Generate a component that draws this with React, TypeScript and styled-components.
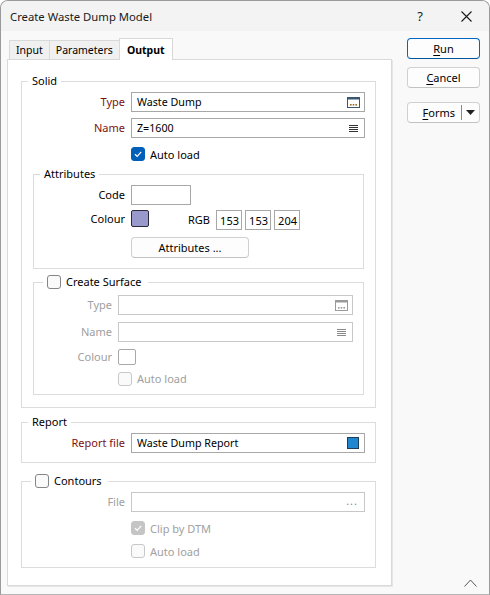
import React from "react";
import styled, { createGlobalStyle } from "styled-components";

const GlobalStyle = createGlobalStyle`
  html, body {
    margin: 0;
    padding: 0;
    background: #ffffff;
  }
  body {
    font-family: "Noto Sans", "DejaVu Sans", sans-serif;
    font-size: 11px;
    color: #000;
  }
  * {
    box-sizing: border-box;
  }
`;

type Tone = "normal" | "req" | "dis";

const toneColor = (t: Tone) =>
  t === "req" ? "#7a1212" : t === "dis" ? "#a0a0a0" : "#000000";

function App() {
  return (
    <>
      <GlobalStyle />
      <Window>
        <TitleBar>
          <Title>Create Waste Dump Model</Title>
          <TitleBtn>?</TitleBtn>
          <TitleBtn>
            <svg width="11" height="11" viewBox="0 0 11 11">
              <path d="M0.5 0.5 L10.5 10.5 M10.5 0.5 L0.5 10.5" stroke="#1a1a1a" strokeWidth="1.1" />
            </svg>
          </TitleBtn>
        </TitleBar>

        <Body>
          <TabArea>
            <TabStrip>
              <Tab>Input</Tab>
              <Tab>Parameters</Tab>
              <Tab $active>Output</Tab>
            </TabStrip>

            <Panel>
              <Group $pb={12}>
                <Legend>Solid</Legend>
                <Rows>
                  <Row $label={93}>
                    <Label $tone="req">Type</Label>
                    <Field>
                      <FieldText>Waste Dump</FieldText>
                      <BrowseIcon />
                    </Field>
                  </Row>
                  <Row $label={93}>
                    <Label $tone="req">Name</Label>
                    <Field>
                      <FieldText>Z=1600</FieldText>
                      <ListIcon />
                    </Field>
                  </Row>
                  <Row $label={93}>
                    <span />
                    <Check checked>Auto load</Check>
                  </Row>
                </Rows>

                <SubGroup $mt={2} $pb={10}>
                  <Legend>Attributes</Legend>
                  <Rows>
                    <Row $label={81}>
                      <Label $tone="normal">Code</Label>
                      <SmallBox />
                    </Row>
                    <Row $label={81} $align="start" $gap={5}>
                      <Label $tone="normal" $top={1}>
                        Colour
                      </Label>
                      <ColourLine>
                        <Swatch $fill="#9999cc" />
                        <RgbLabel>RGB</RgbLabel>
                        <RgbBoxes>
                          <RgbBox>153</RgbBox>
                          <RgbBox>153</RgbBox>
                          <RgbBox>204</RgbBox>
                        </RgbBoxes>
                      </ColourLine>
                    </Row>
                    <Row $label={81} $gap={7}>
                      <span />
                      <PushButton $w={118}>Attributes ...</PushButton>
                    </Row>
                  </Rows>
                </SubGroup>

                <SubGroup $mt={5} $pb={9}>
                  <Legend $boxed>
                    <Check>Create Surface</Check>
                  </Legend>
                  <Rows $pt={4}>
                    <Row $label={68} $gap={7}>
                      <Label $tone="dis">Type</Label>
                      <Field $disabled>
                        <FieldText />
                        <BrowseIcon disabled />
                      </Field>
                    </Row>
                    <Row $label={68} $gap={7}>
                      <Label $tone="dis">Name</Label>
                      <Field $disabled>
                        <FieldText />
                        <ListIcon disabled />
                      </Field>
                    </Row>
                    <Row $label={68} $gap={7} $h={16}>
                      <Label $tone="dis">Colour</Label>
                      <Swatch $fill="#ffffff" $disabled $h={16} />
                    </Row>
                    <Row $label={68} $h={14}>
                      <span />
                      <Check disabled>Auto load</Check>
                    </Row>
                  </Rows>
                </SubGroup>
              </Group>

              <Group $mt={6} $pb={9}>
                <Legend>Report</Legend>
                <Rows>
                  <Row $label={93}>
                    <Label $tone="req">Report file</Label>
                    <Field>
                      <FieldText>Waste Dump Report</FieldText>
                      <ReportIcon />
                    </Field>
                  </Row>
                </Rows>
              </Group>

              <Group $mt={10} $pb={6}>
                <Legend $boxed>
                  <Check>Contours</Check>
                </Legend>
                <Rows>
                  <Row $label={93}>
                    <Label $tone="dis">File</Label>
                    <Field $disabled>
                      <FieldText />
                      <Dots>...</Dots>
                    </Field>
                  </Row>
                  <Row $label={93}>
                    <span />
                    <Check checked disabled>
                      Clip by DTM
                    </Check>
                  </Row>
                  <Row $label={93} $mt={-3}>
                    <span />
                    <Check disabled>Auto load</Check>
                  </Row>
                </Rows>
              </Group>
            </Panel>
          </TabArea>

          <SideColumn>
            <PushButton $w={73} $h={21} $default>
              <u>R</u>un
            </PushButton>
            <PushButton $w={73} $h={21} $mt={8}>
              <u>C</u>ancel
            </PushButton>
            <SplitButton>
              <SplitMain>
                <u>F</u>orms
              </SplitMain>
              <SplitDivider />
              <SplitArrow>
                <svg width="9" height="5" viewBox="0 0 9 5">
                  <path d="M0 0 H9 L4.5 5 Z" fill="#222" />
                </svg>
              </SplitArrow>
            </SplitButton>
            <Collapse>
              <svg width="13" height="8" viewBox="0 0 13 8">
                <path d="M0.5 7.5 L6.5 1 L12.5 7.5" fill="none" stroke="#555" strokeWidth="1" />
              </svg>
            </Collapse>
          </SideColumn>
        </Body>
      </Window>
    </>
  );
}

type CheckProps = {
  checked?: boolean;
  disabled?: boolean;
  children?: React.ReactNode;
};

function Check({ checked, disabled, children }: CheckProps) {
  return (
    <CheckWrap $disabled={disabled}>
      <CheckBox $checked={checked} $disabled={disabled}>
        {checked && (
          <svg width="10" height="10" viewBox="0 0 10 10">
            <path d="M2 5.2 L4.2 7.3 L8.2 2.8" fill="none" stroke="#fff" strokeWidth="1.2" />
          </svg>
        )}
      </CheckBox>
      {children}
    </CheckWrap>
  );
}

function BrowseIcon({ disabled }: { disabled?: boolean }) {
  const frame = disabled ? "#9a9a9a" : "#3b5670";
  const dots = disabled ? "#9a9a9a" : "#9c6a22";
  return (
    <svg width="13" height="11" viewBox="0 0 13 11">
      <rect x="0.5" y="0.5" width="12" height="10" fill="#fff" stroke={frame} />
      <rect x="1" y="1" width="11" height="1.5" fill={frame} />
      <rect x="3" y="7" width="1.6" height="1.6" fill={dots} />
      <rect x="5.7" y="7" width="1.6" height="1.6" fill={dots} />
      <rect x="8.4" y="7" width="1.6" height="1.6" fill={dots} />
    </svg>
  );
}

function ListIcon({ disabled }: { disabled?: boolean }) {
  const c = disabled ? "#8a8a8a" : "#333";
  return (
    <svg width="9" height="9" viewBox="0 0 9 9" style={{ marginRight: 2 }}>
      <path d="M0 1.5 H9 M0 3.5 H9 M0 5.5 H9 M0 7.5 H9" stroke={c} strokeWidth="1" />
    </svg>
  );
}

function ReportIcon() {
  return (
    <svg width="12" height="12" viewBox="0 0 12 12" style={{ marginRight: 1 }}>
      <rect x="0.5" y="0.5" width="11" height="11" fill="#1f86d0" stroke="#1d3d58" />
    </svg>
  );
}

export default App;

const Window = styled.div`
  width: 490px;
  height: 595px;
  border: 1px solid #9a9a9a;
  border-bottom-color: #b5b5b5;
  border-radius: 8px 8px 0 0;
  background: #f9f9f9;
  display: flex;
  flex-direction: column;
  overflow: hidden;
`;

const TitleBar = styled.div`
  height: 30px;
  flex: none;
  display: flex;
  align-items: center;
  background: #f3f3f3;
  padding-left: 9px;
`;

const Title = styled.div`
  flex: 1;
  font-size: 11.3px;
  color: #1a1a1a;
  padding-top: 1px;
`;

const TitleBtn = styled.div`
  width: 46px;
  height: 30px;
  display: flex;
  align-items: center;
  justify-content: center;
  font-size: 13px;
  color: #1a1a1a;
`;

const Body = styled.div`
  flex: 1;
  display: flex;
  padding: 7px 0 7px 6px;
`;

const TabArea = styled.div`
  width: 385px;
  display: flex;
  flex-direction: column;
`;

const TabStrip = styled.div`
  height: 21px;
  display: flex;
  align-items: flex-end;
  padding-left: 3px;
  position: relative;
  z-index: 1;
`;

const Tab = styled.div<{ $active?: boolean }>`
  height: ${(p) => (p.$active ? 22 : 19)}px;
  margin-bottom: ${(p) => (p.$active ? -1 : 0)}px;
  padding: 0 ${(p) => (p.$active ? 7 : 6)}px;
  display: flex;
  align-items: center;
  border: 1px solid #d9d9d9;
  border-bottom: none;
  margin-left: -1px;
  background: ${(p) => (p.$active ? "#ffffff" : "#f0f0f0")};
  font-weight: ${(p) => (p.$active ? 700 : 400)};
  font-size: 10.5px;
  color: #000;
`;

const Panel = styled.div`
  height: 527px;
  background: #ffffff;
  border: 1px solid #d9d9d9;
  box-shadow: 1px 1px 0 #e6e6e6;
  padding: 13px 15px 0 13px;
`;

const Group = styled.fieldset<{ $mt?: number; $pb?: number }>`
  margin: ${(p) => p.$mt ?? 0}px 0 0;
  padding: 0 10px ${(p) => p.$pb ?? 11}px;
  border: 1px solid #dcdcdc;
  min-width: 0;
`;

const SubGroup = styled(Group)`
  margin-left: 1px;
  margin-right: 1px;
  padding-bottom: ${(p) => p.$pb ?? 9}px;
`;

const Legend = styled.legend<{ $boxed?: boolean }>`
  padding: 0 ${(p) => (p.$boxed ? 6 : 4)}px 0 4px;
  margin-left: ${(p) => (p.$boxed ? -1 : -4)}px;
  line-height: 16px;
  height: 16px;
`;

const Rows = styled.div<{ $pt?: number }>`
  display: flex;
  flex-direction: column;
  gap: 6px;
  padding-top: ${(p) => p.$pt ?? 3}px;
`;

const Row = styled.div<{
  $label: number;
  $gap?: number;
  $mt?: number;
  $h?: number;
  $align?: string;
}>`
  display: grid;
  grid-template-columns: ${(p) => p.$label}px 1fr;
  column-gap: 6px;
  align-items: ${(p) => p.$align ?? "center"};
  min-height: ${(p) => p.$h ?? 20}px;
  height: ${(p) => (p.$h ? `${p.$h}px` : "auto")};
  margin-top: ${(p) => (p.$gap !== undefined ? p.$gap - 6 : 0) + (p.$mt ?? 0)}px;
`;

const Label = styled.span<{ $tone: Tone; $top?: number }>`
  text-align: right;
  color: ${(p) => toneColor(p.$tone)};
  white-space: nowrap;
  line-height: 16px;
  padding-top: ${(p) => p.$top ?? 0}px;
`;

const Field = styled.div<{ $disabled?: boolean }>`
  height: 20px;
  border: 1px solid ${(p) => (p.$disabled ? "#c8c8c8" : "#a8a8a8")};
  background: #fff;
  display: flex;
  align-items: center;
  padding: 0 4px 0 5px;
`;

const FieldText = styled.span`
  flex: 1;
  white-space: nowrap;
  overflow: hidden;
  font-size: 10.7px;
`;

const Dots = styled.span`
  color: #888;
  letter-spacing: 1px;
  line-height: 1;
  padding-bottom: 4px;
  margin-right: 2px;
`;

const SmallBox = styled.div`
  width: 60px;
  height: 20px;
  border: 1px solid #a8a8a8;
  background: #fff;
`;

const ColourLine = styled.div`
  display: flex;
  align-items: flex-start;
`;

const Swatch = styled.div<{ $fill: string; $disabled?: boolean; $h?: number }>`
  width: 18px;
  height: ${(p) => p.$h ?? 17}px;
  border: 1px solid ${(p) => (p.$disabled ? "#a8a8a8" : "#2a2a3a")};
  border-radius: 2px;
  background: ${(p) => p.$fill};
`;

const RgbLabel = styled.span`
  width: 28px;
  margin-left: 39px;
  line-height: 20px;
`;

const RgbBoxes = styled.div`
  display: flex;
  gap: 3px;
`;

const RgbBox = styled.div`
  width: 26px;
  height: 20px;
  border: 1px solid #a8a8a8;
  display: flex;
  align-items: center;
  justify-content: flex-end;
  padding-right: 2px;
`;

const PushButton = styled.div<{
  $w: number;
  $h?: number;
  $mt?: number;
  $default?: boolean;
}>`
  width: ${(p) => p.$w}px;
  height: ${(p) => p.$h ?? 21}px;
  margin-top: ${(p) => p.$mt ?? 0}px;
  border: 1px solid ${(p) => (p.$default ? "#0067c0" : "#d0d0d0")};
  border-bottom-color: ${(p) => (p.$default ? "#00549c" : "#c2c2c2")};
  border-radius: 4px;
  background: #fdfdfd;
  display: flex;
  align-items: center;
  justify-content: center;
  color: #000;
  u {
    text-decoration-thickness: 1px;
    text-underline-offset: 2px;
  }
`;

const SideColumn = styled.div`
  margin-left: 15px;
  width: 74px;
  display: flex;
  flex-direction: column;
`;

const SplitButton = styled.div`
  margin-top: 14px;
  width: 73px;
  height: 21px;
  border: 1px solid #d0d0d0;
  border-bottom-color: #c2c2c2;
  border-radius: 4px;
  background: #fdfdfd;
  display: flex;
  align-items: center;
  u {
    text-decoration-thickness: 1px;
    text-underline-offset: 2px;
  }
`;

const SplitMain = styled.span`
  flex: 1;
  text-align: right;
  padding-right: 6px;
`;

const SplitDivider = styled.span`
  width: 1px;
  height: 15px;
  background: #8a8a8a;
`;

const SplitArrow = styled.span`
  width: 17px;
  display: flex;
  justify-content: center;
`;

const Collapse = styled.div`
  margin-top: auto;
  align-self: flex-end;
  margin-right: 4px;
  height: 8px;
  display: flex;
`;

const CheckWrap = styled.label<{ $disabled?: boolean }>`
  display: inline-flex;
  align-items: center;
  gap: 5px;
  color: ${(p) => (p.$disabled ? "#a0a0a0" : "#000")};
  white-space: nowrap;
`;

const CheckBox = styled.span<{ $checked?: boolean; $disabled?: boolean }>`
  width: 14px;
  height: 14px;
  border-radius: 3px;
  display: inline-flex;
  align-items: center;
  justify-content: center;
  border: 1px solid
    ${(p) =>
      p.$checked
        ? p.$disabled
          ? "#c5c5c5"
          : "#005fb8"
        : p.$disabled
        ? "#c8c8c8"
        : "#858585"};
  background: ${(p) =>
    p.$checked ? (p.$disabled ? "#c5c5c5" : "#005fb8") : "#fafafa"};
`;
